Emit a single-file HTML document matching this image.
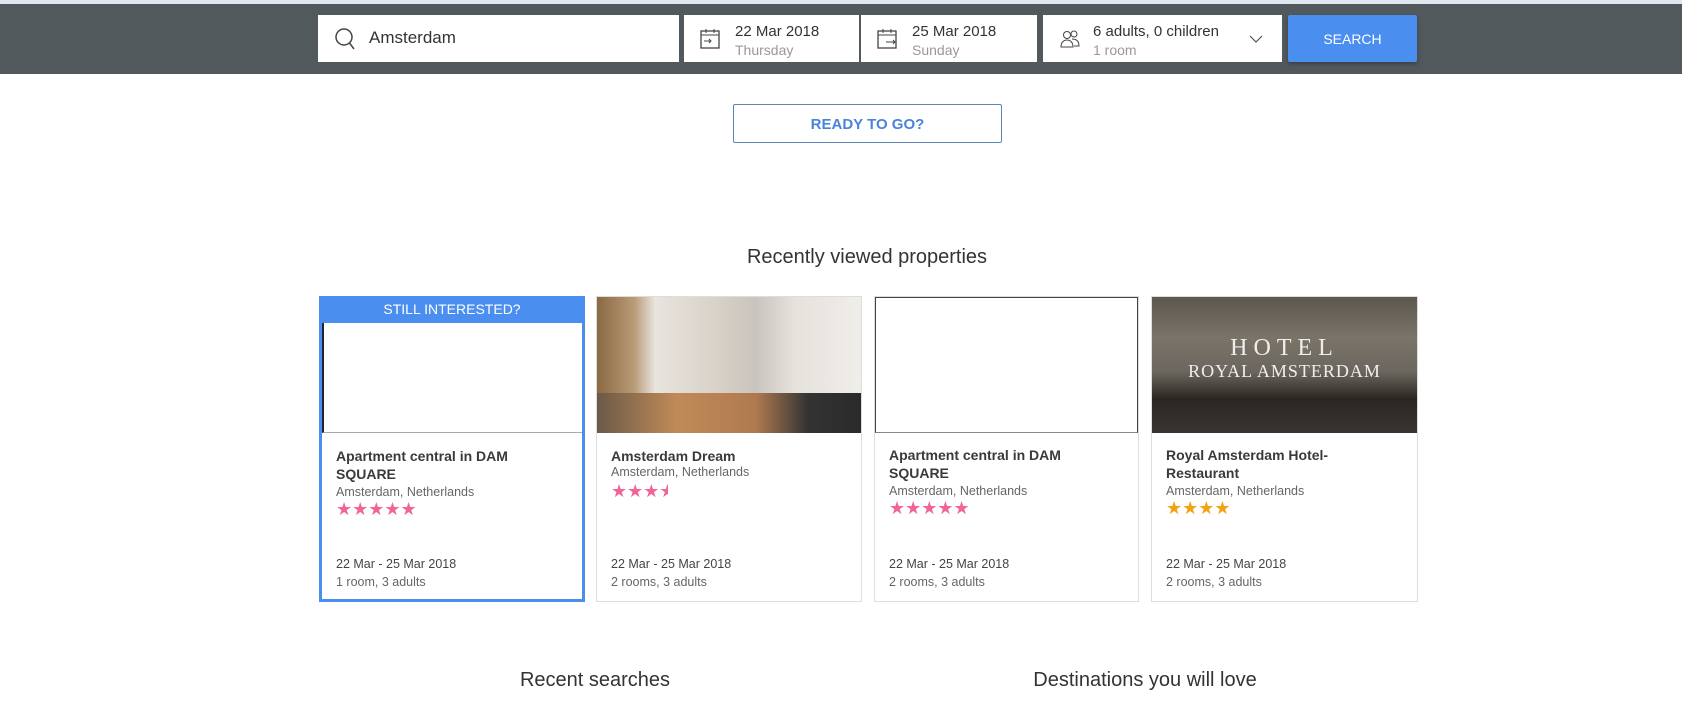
<!DOCTYPE html>
<html><head><meta charset="utf-8"><style>
*{box-sizing:border-box;margin:0;padding:0}
body{width:1682px;height:714px;overflow:hidden;background:#fff;font-family:"Liberation Sans",sans-serif;color:#333;position:relative}
.a{position:absolute}
.bar{left:0;top:0;width:1682px;height:74px;background:#52595d;border-top:4px solid #dfe6ee}
.box{background:#fff;top:15px;height:47px}
.t1{font-size:15px;color:#333}
.t2{font-size:14px;color:#999}
.card{top:296px;height:306px;border:1px solid #ddd;background:#fff}
.card .img{position:absolute;left:0;top:0;right:0;height:136px}
.ti{position:absolute;left:14px;font-size:14px;font-weight:bold;color:#3a3a3a;line-height:18px;width:220px}
.loc{position:absolute;left:14px;font-size:12.5px;color:#666}
.st{position:absolute;left:14px;font-size:18px;letter-spacing:0px}
.dt{position:absolute;left:14px;font-size:12.5px;color:#444}
.h2{font-size:20px;color:#333;text-align:center;width:500px}
</style></head><body>
<div class="a bar"></div>
<div class="a box" style="left:318px;width:361px">
<svg class="a" style="left:16px;top:12px" width="22" height="24" viewBox="0 0 22 24"><circle cx="10" cy="10" r="8" fill="none" stroke="#444" stroke-width="1.5"/><line x1="15.5" y1="16" x2="20" y2="22" stroke="#444" stroke-width="1.5"/></svg>
<div class="a" style="left:51px;top:13px;font-size:17px;color:#333">Amsterdam</div></div>
<div class="a box" style="left:684px;width:175px">
<svg class="a" style="left:16px;top:13px" width="20" height="22" viewBox="0 0 20 22"><rect x="1" y="3" width="18" height="17" fill="none" stroke="#444" stroke-width="1.3"/><line x1="1" y1="7" x2="19" y2="7" stroke="#444"/><line x1="6" y1="1" x2="6" y2="5" stroke="#444"/><line x1="14" y1="1" x2="14" y2="5" stroke="#444"/><path d="M4 13h7m-2-2l2 2-2 2" fill="none" stroke="#444"/></svg>
<div class="a t1" style="left:51px;top:8px">22 Mar 2018</div><div class="a t2" style="left:51px;top:27px">Thursday</div></div>
<div class="a box" style="left:861px;width:176px">
<svg class="a" style="left:16px;top:13px" width="20" height="22" viewBox="0 0 20 22"><rect x="1" y="3" width="18" height="17" fill="none" stroke="#444" stroke-width="1.3"/><line x1="1" y1="7" x2="19" y2="7" stroke="#444"/><line x1="6" y1="1" x2="6" y2="5" stroke="#444"/><line x1="14" y1="1" x2="14" y2="5" stroke="#444"/><path d="M9 14h9m-2-2l2 2-2 2" fill="none" stroke="#444"/></svg>
<div class="a t1" style="left:51px;top:8px">25 Mar 2018</div><div class="a t2" style="left:51px;top:27px">Sunday</div></div>
<div class="a box" style="left:1043px;width:239px">
<svg class="a" style="left:16px;top:14px" width="22" height="20" viewBox="0 0 22 20"><circle cx="8" cy="6" r="3.5" fill="none" stroke="#444"/><circle cx="15" cy="5" r="3" fill="none" stroke="#444"/><path d="M2 18c0-5 3-7 6-7s6 2 6 7z" fill="none" stroke="#444"/><path d="M13 10c3 0 7 1 7 7h-5" fill="none" stroke="#444"/></svg>
<div class="a t1" style="left:50px;top:8px">6 adults, 0 children</div><div class="a t2" style="left:50px;top:27px">1 room</div>
<svg class="a" style="left:206px;top:20px" width="14" height="9" viewBox="0 0 14 9"><path d="M1 1l6 6 6-6" fill="none" stroke="#555" stroke-width="1.2"/></svg></div>
<div class="a" style="left:1288px;top:15px;width:129px;height:47px;background:#4a8ef0;color:#fff;font-size:14px;text-align:center;line-height:49px;border-radius:2px;box-shadow:0 2px 4px rgba(0,0,0,.3)">SEARCH</div>
<div class="a" style="left:733px;top:104px;width:269px;height:39px;border:1px solid #5b86b8;border-radius:2px;color:#4a84d8;font-weight:bold;font-size:15px;text-align:center;line-height:40px">READY TO GO?</div>
<div class="a h2" style="left:617px;top:246px">Recently viewed properties</div>

<div class="a card" style="left:319px;width:266px;border:3px solid #4a8ef0">
<div class="a" style="left:-3px;top:-3px;width:266px;height:27px;background:#4a8ef0;color:#fff;font-size:14px;text-align:center;line-height:27px">STILL INTERESTED?</div>
<div class="a" style="left:0;top:24px;width:260px;height:110px;border-left:2px solid #223;border-bottom:1px solid #aaa"></div>
<div class="ti" style="top:148px">Apartment central in DAM SQUARE</div>
<div class="loc" style="top:186px">Amsterdam, Netherlands</div>
<div class="st" style="top:200px;color:#f0649a">★★★★★</div>
<div class="dt" style="top:258px">22 Mar - 25 Mar 2018</div>
<div class="dt" style="top:276px;color:#666">1 room, 3 adults</div></div>

<div class="a card" style="left:596px;width:266px">
<div class="img" style="background:linear-gradient(90deg,#8a6a45 0,#b89a75 14%,#e8e4de 22%,#d8d2c8 45%,#c9c4bd 60%,#e6e2dc 75%,#f0eeea 100%)"><div class="a" style="left:0;bottom:0;width:100%;height:40px;background:linear-gradient(90deg,#6a5a48,#c08a58 30%,#b07a50 60%,#333 80%,#2a2a2a)"></div></div>
<div class="ti" style="top:150px">Amsterdam Dream</div>
<div class="loc" style="top:168px">Amsterdam, Netherlands</div>
<div class="st" style="top:184px;color:#f0649a">★★★<span style="display:inline-block;width:9px;overflow:hidden;vertical-align:top">★</span></div>
<div class="dt" style="top:260px">22 Mar - 25 Mar 2018</div>
<div class="dt" style="top:278px;color:#666">2 rooms, 3 adults</div></div>

<div class="a card" style="left:874px;width:265px">
<div class="img" style="border:1px solid #444;border-bottom:1px solid #888"></div>
<div class="ti" style="top:149px">Apartment central in DAM SQUARE</div>
<div class="loc" style="top:187px">Amsterdam, Netherlands</div>
<div class="st" style="top:201px;color:#f0649a">★★★★★</div>
<div class="dt" style="top:260px">22 Mar - 25 Mar 2018</div>
<div class="dt" style="top:278px;color:#666">2 rooms, 3 adults</div></div>

<div class="a card" style="left:1151px;width:267px">
<div class="img" style="background:linear-gradient(180deg,#5c574f 0,#7a7468 30%,#6b665e 55%,#2a2622 75%,#3a3530 100%)">
<div class="a" style="left:0;top:38px;width:100%;text-align:center;color:#eee;font-family:'Liberation Serif',serif;font-size:24px;letter-spacing:6px">HOTEL</div>
<div class="a" style="left:0;top:64px;width:100%;text-align:center;color:#eee;font-family:'Liberation Serif',serif;font-size:18px;letter-spacing:1px">ROYAL AMSTERDAM</div></div>
<div class="ti" style="top:149px">Royal Amsterdam Hotel-Restaurant</div>
<div class="loc" style="top:187px">Amsterdam, Netherlands</div>
<div class="st" style="top:201px;color:#f2a20f">★★★★</div>
<div class="dt" style="top:260px">22 Mar - 25 Mar 2018</div>
<div class="dt" style="top:278px;color:#666">2 rooms, 3 adults</div></div>

<div class="a h2" style="left:345px;top:669px">Recent searches</div>
<div class="a h2" style="left:895px;top:669px">Destinations you will love</div>
</body></html>
